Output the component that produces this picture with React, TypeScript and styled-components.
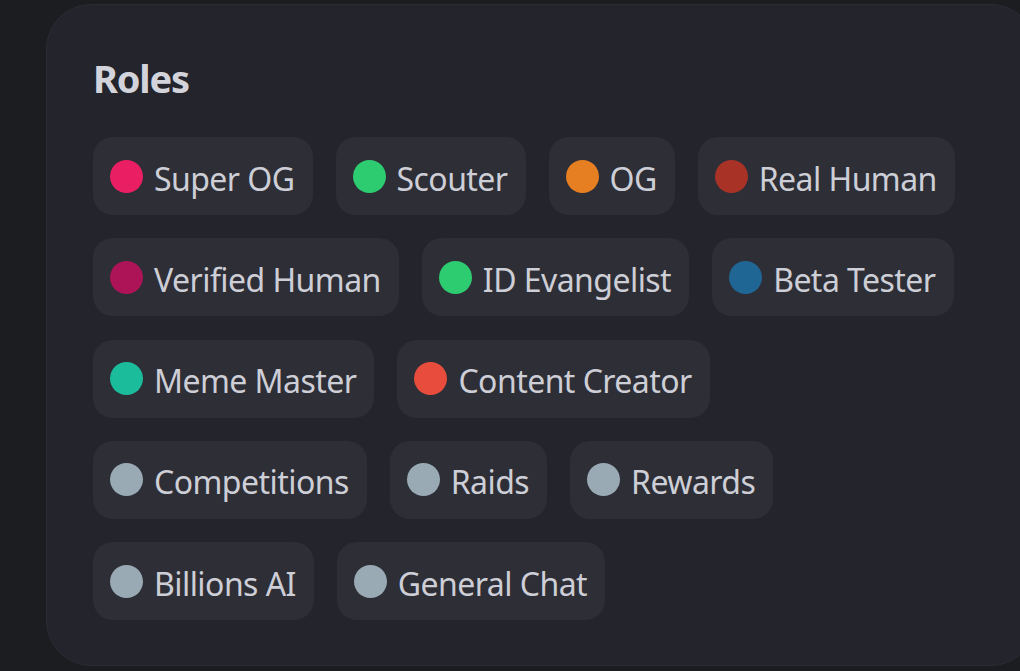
import React from "react";
import styled, { createGlobalStyle } from "styled-components";

const Global = createGlobalStyle`
  html, body {
    margin: 0;
    padding: 0;
    background: #1c1d21;
    overflow: hidden;
  }
  #root {
    width: 1020px;
    height: 671px;
    overflow: hidden;
  }
`;

const Page = styled.div`
  width: 1020px;
  height: 671px;
  box-sizing: border-box;
  padding: 4px 0 0 46px;
  background: #1c1d21;
  overflow: hidden;
`;

const Panel = styled.section`
  width: 990px;
  height: 662px;
  box-sizing: border-box;
  padding: 50px 0 0 46px;
  background: #24252c;
  border: 1px solid #2b2c33;
  border-radius: 45px;
  font-family: "Noto Sans", "DejaVu Sans", sans-serif;
`;

const Title = styled.h2`
  margin: 0 0 36px 0;
  font-size: 38px;
  line-height: 46px;
  font-weight: 700;
  letter-spacing: -1.2px;
  color: #d3d4db;
`;

const ChipList = styled.div`
  display: flex;
  flex-wrap: wrap;
  row-gap: 23.3px;
  column-gap: 23px;
  width: 880px;
`;

const Chip = styled.div`
  display: flex;
  align-items: center;
  gap: 11px;
  height: 78px;
  box-sizing: border-box;
  padding: 0 18px 0 17px;
  background: #2d2e36;
  border-radius: 20px;
`;

const Dot = styled.span<{ $color: string }>`
  width: 33px;
  height: 33px;
  border-radius: 50%;
  background: ${(p) => p.$color};
  flex: none;
`;

const Label = styled.span`
  padding-top: 5px;
  font-size: 32px;
  line-height: 1;
  letter-spacing: -0.55px;
  color: #cdced6;
  white-space: nowrap;
`;

const roles: { name: string; color: string }[] = [
  { name: "Super OG", color: "#e91e63" },
  { name: "Scouter", color: "#2ecc71" },
  { name: "OG", color: "#e67e22" },
  { name: "Real Human", color: "#a93226" },
  { name: "Verified Human", color: "#ad1457" },
  { name: "ID Evangelist", color: "#2ecc71" },
  { name: "Beta Tester", color: "#206694" },
  { name: "Meme Master", color: "#1abc9c" },
  { name: "Content Creator", color: "#e74c3c" },
  { name: "Competitions", color: "#99aab5" },
  { name: "Raids", color: "#99aab5" },
  { name: "Rewards", color: "#99aab5" },
  { name: "Billions AI", color: "#99aab5" },
  { name: "General Chat", color: "#99aab5" },
];

export default function App() {
  return (
    <>
      <Global />
      <Page>
        <Panel>
          <Title>Roles</Title>
          <ChipList>
            {roles.map((r) => (
              <Chip key={r.name}>
                <Dot $color={r.color} />
                <Label>{r.name}</Label>
              </Chip>
            ))}
          </ChipList>
        </Panel>
      </Page>
    </>
  );
}
